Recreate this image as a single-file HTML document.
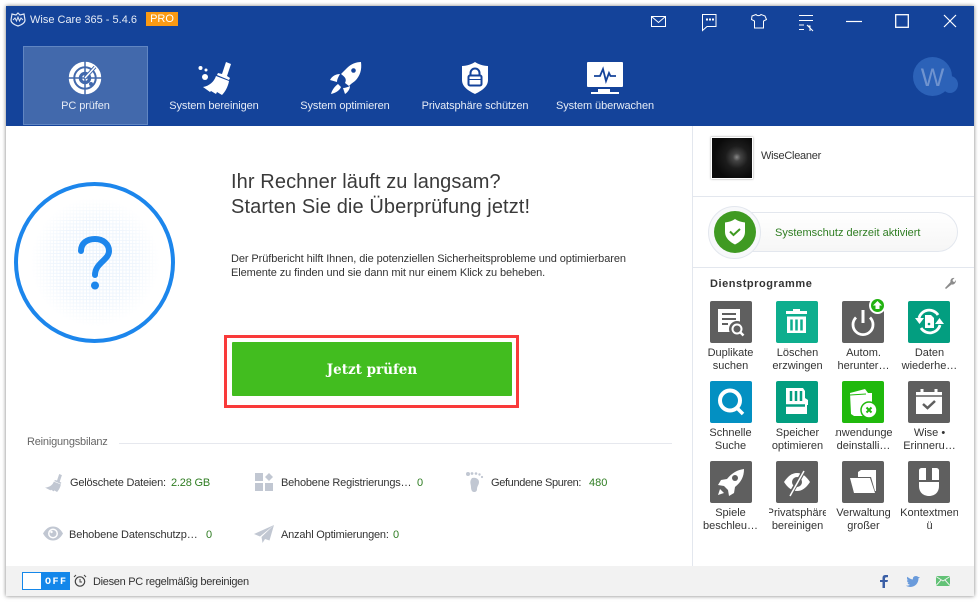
<!DOCTYPE html>
<html><head><meta charset="utf-8">
<style>
html,body{margin:0;padding:0;width:980px;height:602px;overflow:hidden;background:#fff;font-family:"Liberation Sans",sans-serif;}
div,svg,span{position:absolute;}
.t{white-space:nowrap;font-size:11px;line-height:13px;color:#333;letter-spacing:-.2px;}
.n{white-space:nowrap;font-size:11px;line-height:14px;color:#e6ecf6;text-align:center;top:99px;letter-spacing:-.1px;}
.i{width:42px;height:42px;border-radius:2px;background:#5f5f5f;}
.l{width:57px;overflow:hidden;text-align:center;white-space:nowrap;font-size:11px;line-height:13px;color:#333;}
.l span{position:static;display:block;margin:0 -30px;}
.g{color:#2f7d22;letter-spacing:0;}
</style></head><body>
<div style="left:6px;top:6px;width:968px;height:590px;box-shadow:0 0 4px rgba(0,0,0,.5);background:#fff;"></div>
<div style="left:6px;top:6px;width:968px;height:120px;background:#14439a;"></div>

<svg style="left:10px;top:12px" width="16" height="15" viewBox="0 0 16 15"><path d="M8 1l2 2 4-1 1 6c0 3-4 5-7 6-3-1-7-3-7-6l1-6 4 1z" fill="none" stroke="#dfe7f5" stroke-width="1.2"/><path d="M3 8l2-2 1.500 3L8 5l1.500 4L11 6l2 2" fill="none" stroke="#dfe7f5" stroke-width="1"/></svg>
<div class="t" style="left:30px;top:14px;color:#e6ecf6;font-size:11px;letter-spacing:0;">Wise Care 365 - 5.4.6</div>
<div style="left:146px;top:12px;width:32px;height:14px;background:#fb9a13;color:#fff;font-size:11px;line-height:14px;text-align:center;">PRO</div>

<svg style="left:650px;top:12px" width="320" height="20" viewBox="0 0 320 20" fill="none" stroke="#fff" stroke-width="1">
<path d="M1.500 4.500h14v10h-14zM1.500 4.500l7 6 7-6"/>
<path d="M52.500 2.500h13.500v12h-9l-4.500 4z"/><path d="M56 7.500h2M59 7.500h2M62 7.500h2" stroke-width="2"/>
<path d="M102 4l4-1.500c1 1.500 4 1.500 5 0l4 1.500 1.500 3.500-3 1.500v7h-9v-7l-3-1.500z"/>
<path d="M149 3.500h14M149 8.500h14M149 13h5M149 17.500h5M160 19v-5h-2.500M157 13l6 6"/>
<path d="M196 9.500h16" stroke-width="1.200"/>
</svg>
<svg style="left:895px;top:14px" width="14" height="14" viewBox="0 0 14 14"><rect x="0.700" y="0.700" width="12.600" height="12.600" fill="none" stroke="#fff" stroke-width="1.300"/></svg>
<svg style="left:943px;top:14px" width="14" height="14" viewBox="0 0 14 14"><path d="M1 1l12 12M13 1L1 13" stroke="#fff" stroke-width="1.200"/></svg>

<div style="left:23px;top:46px;width:123px;height:77px;background:#4269ac;border:1px solid #6186c2;"></div>
<svg style="left:68px;top:61px" width="34" height="34" viewBox="0 0 34 34" fill="none" stroke="#fff">
<circle cx="17" cy="17" r="14" stroke-width="4.500"/><circle cx="17" cy="17" r="8" stroke-width="3.500"/><circle cx="17" cy="17" r="3" fill="#fff" stroke="none"/>
<path d="M17 0v34M0 17h34" stroke="#4269ac" stroke-width="1.500"/><path d="M17 17L27 6" stroke="#4269ac" stroke-width="3.500"/><path d="M17 17L27 6" stroke="#fff" stroke-width="1.500"/>
<circle cx="23" cy="23" r="2" fill="#4269ac" stroke="none"/></svg>
<div class="n" style="left:23px;width:125px;">PC prüfen</div>

<svg style="left:198px;top:61px" width="35" height="35" viewBox="0 0 35 35" fill="#fff">
<path d="M28 1L33 3 29 15 32 17 31 19 19 14 20 12 24 13z"/>
<path d="M18 15L31 20C30 26 27 31 24 34L19 31 18 33 13 30 12 31 5 26C11 25 16 21 18 15z"/>
<circle cx="2.500" cy="7" r="2"/><circle cx="8" cy="9" r="1.500"/><circle cx="7" cy="16" r="3"/></svg>
<div class="n" style="left:154px;width:120px;">System bereinigen</div>

<svg style="left:329px;top:61px" width="33" height="34" viewBox="0 0 33 34" fill="#fff">
<path d="M32 1c1 8-1 14-6 19l-4 3-2 2-4-3C18 18 16 16 12 13l3-3 3-3c4-4 9-6 14-6z"/><circle cx="24.500" cy="9.500" r="2.300" fill="#14439a"/>
<path d="M11 13c-4 0-8 2-10 6l7 2c0-3 2-6 3-8zM21 25c0 3-2 6-5 8l-2-6c2 0 5-1 7-2zM9 23l3 3c-1 3-5 6-10 7 1-4 4-8 7-10z"/></svg>
<div class="n" style="left:285px;width:120px;">System optimieren</div>

<svg style="left:461px;top:61px" width="28" height="34" viewBox="0 0 28 34">
<path d="M14 1c3 2 8 4 13 4v14c0 7-7 11-13 14C8 30 1 26 1 19V5c5 0 10-2 13-4z" fill="#fff"/>
<rect x="7.500" y="14.500" width="13" height="10" rx="1.500" fill="none" stroke="#14439a" stroke-width="2"/><path d="M9.500 14.500v-2.500a4.500 4.500 0 0 1 9 0v2.500" fill="none" stroke="#14439a" stroke-width="2"/><path d="M8 18.500h12" stroke="#14439a" stroke-width="1"/></svg>
<div class="n" style="left:410px;width:130px;">Privatsphäre schützen</div>

<svg style="left:587px;top:62px" width="36" height="32" viewBox="0 0 36 32">
<rect x="0" y="0" width="36" height="25" rx="1" fill="#fff"/>
<path d="M11 27h12v3H11zM4 30h28v2H4z" fill="#fff"/>
<path d="M7 14h6l3-7 3 12 3-8 1.500 3H29" fill="none" stroke="#14439a" stroke-width="1.800"/></svg>
<div class="n" style="left:545px;width:120px;">System überwachen</div>

<div style="left:913px;top:57px;width:39px;height:39px;border-radius:50%;background:#2c62b8;"></div>
<div style="left:942px;top:76px;width:16px;height:17px;border-radius:50%;background:#2c62b8;"></div>
<div style="left:913px;top:63px;width:39px;text-align:center;color:#6f93cf;font-size:25px;line-height:30px;">W</div>

<!-- left -->
<div style="left:14px;top:182px;width:161px;height:161px;box-sizing:border-box;border:4px solid #1c86ec;border-radius:50%;background:#fff;"></div>
<div style="left:30px;top:197px;width:130px;height:130px;background-image:linear-gradient(#e2eefb 1px,transparent 1px),linear-gradient(90deg,#e2eefb 1px,transparent 1px);background-size:3.300px 3.300px;-webkit-mask-image:radial-gradient(circle,rgba(0,0,0,.8) 0,rgba(0,0,0,.55) 45%,transparent 70%);mask-image:radial-gradient(circle,rgba(0,0,0,.8) 0,rgba(0,0,0,.55) 45%,transparent 70%);"></div>
<svg style="left:70px;top:230px" width="50" height="66" viewBox="0 0 50 66" fill="none"><path d="M11 21C11 13 17 9 25 9C33 9 39 14 39 21C39 30 25 33 25 45" stroke="#1c86ec" stroke-width="6" stroke-linecap="round"/><circle cx="25" cy="55.500" r="4" fill="#1c86ec"/></svg>

<div style="left:231px;top:170px;font-size:20px;letter-spacing:.1px;line-height:25px;color:#3a3a3a;white-space:nowrap;">Ihr Rechner läuft zu langsam?<br>Starten Sie die Überprüfung jetzt!</div>
<div style="left:231px;top:253px;font-size:11px;letter-spacing:-.09px;line-height:13.500px;color:#333;white-space:nowrap;">Der Prüfbericht hilft Ihnen, die potenziellen Sicherheitsprobleme und optimierbaren<br>Elemente zu finden und sie dann mit nur einem Klick zu beheben.</div>

<div style="left:224px;top:335px;width:295px;height:73px;box-sizing:border-box;border:3px solid #f93a3a;"></div>
<div style="left:232px;top:342px;width:280px;height:54px;background:#42bd1f;border-radius:1px;color:#fff;font:bold 13.500px/56px 'DejaVu Serif',serif;text-align:center;">Jetzt prüfen</div>

<div class="t" style="left:27px;top:436px;color:#666;">Reinigungsbilanz</div>
<div style="left:119px;top:443px;width:553px;height:1px;background:#e6e8ee;"></div>

<svg style="left:44px;top:473px" width="19" height="20" viewBox="0 0 35 35" fill="#c1c7d2"><path d="M28 1L33 3 29 15 32 17 31 19 19 14 20 12 24 13z"/><path d="M18 15L31 20C30 26 27 31 24 34L19 31 18 33 13 30 12 31 2 26C11 25 16 21 18 15z"/></svg>
<div class="t" style="left:70px;top:477px;">Gelöschete Dateien:</div>
<div class="t g" style="left:171px;top:477px;letter-spacing:-.2px;">2.28 GB</div>

<svg style="left:255px;top:473px" width="18" height="18" viewBox="0 0 18 18" fill="#c1c7d2"><rect width="8" height="8"/><rect y="10" width="8" height="8"/><rect x="10" y="10" width="8" height="8"/><path d="M14 0l4 4-4 4-4-4z"/></svg>
<div class="t" style="left:281px;top:477px;">Behobene Registrierungs…</div>
<div class="t g" style="left:417px;top:477px;">0</div>

<svg style="left:466px;top:472px" width="18" height="20" viewBox="0 0 18 20" fill="#c1c7d2"><path d="M6 6c4-1 7 1 7 4 0 3-2 4-2 7 0 2-1 3-3 3s-3-2-3-5-2-5 1-9z"/><circle cx="2" cy="2" r="2"/><circle cx="6" cy="1.500" r="1.400"/><circle cx="10" cy="1.500" r="1.300"/><circle cx="13.500" cy="2.500" r="1.200"/><circle cx="16" cy="5" r="1.100"/></svg>
<div class="t" style="left:491px;top:477px;letter-spacing:-.35px;">Gefundene Spuren:</div>
<div class="t g" style="left:589px;top:477px;">480</div>

<svg style="left:43px;top:526px" width="20" height="15" viewBox="0 0 20 15"><path d="M0 7.500C3 2.500 6 0.500 10 0.500s7 2 10 7c-3 5-6 7-10 7s-7-2-10-7z" fill="#c1c7d2"/><circle cx="10" cy="7.500" r="5" fill="#fff"/><circle cx="10" cy="7.500" r="3.500" fill="#c1c7d2"/><circle cx="8.500" cy="6" r="1.200" fill="#fff"/></svg>
<div class="t" style="left:69px;top:529px;letter-spacing:-.13px;">Behobene Datenschutzp…</div>
<div class="t g" style="left:206px;top:529px;">0</div>

<svg style="left:254px;top:525px" width="20" height="18" viewBox="0 0 20 18" fill="#c1c7d2"><path d="M20 0L0 9l6 2.500zM20 0L7.500 12l1 6 2.500-4 4.500 1.500z"/></svg>
<div class="t" style="left:281px;top:529px;">Anzahl Optimierungen:</div>
<div class="t g" style="left:393px;top:529px;">0</div>

<!-- footer -->
<div style="left:6px;top:566px;width:968px;height:30px;background:#f2f2f2;"></div>
<div style="left:22px;top:572px;width:48px;height:18px;background:#1487ea;"></div>
<div style="left:23px;top:573px;width:18px;height:16px;background:#fff;"></div>
<div style="left:45px;top:577px;font:bold 10px/12px 'Liberation Mono',monospace;color:#fff;letter-spacing:1.500px;">OFF</div>
<svg style="left:73px;top:574px" width="14" height="14" viewBox="0 0 14 14" fill="none" stroke="#444"><circle cx="7" cy="7.500" r="4.700" stroke-width="1.200"/><path d="M7 5v3h2M1 3l2-2M13 3l-2-2"/></svg>
<div class="t" style="left:93px;top:576px;letter-spacing:-.3px;">Diesen PC regelmäßig bereinigen</div>

<svg style="left:880px;top:575px" width="8" height="13" viewBox="0 0 8 13"><path d="M2.500 13V7H0V5h2.500V3C2.500 1 3.500 0 5.500 0H8v2.200H6.500C5.500 2.200 5 2.700 5 3.500V5h3L7.500 7H5v6z" fill="#3b5fa6"/></svg>
<svg style="left:906px;top:576px" width="14" height="11" viewBox="0 0 14 12" preserveAspectRatio="none" fill="#6a9bdb"><path d="M14 1.500l-1.500 1C12.500 8 9 12 4.500 12 3 12 1 11.500 0 10.500c1.500 0 3 0 4-1C3 9.500 2 9 1.500 7.500h1.500C1.500 7 1 6 1 4.500l1.500.5C1 4 .5 2 1.500.8 3 2.500 5 3.700 7 3.700 6.500 1.500 8 0 10 0c1 0 1.500.4 2 1z"/></svg>
<svg style="left:936px;top:576px" width="14" height="10" viewBox="0 0 14 11" preserveAspectRatio="none"><rect width="14" height="11" fill="#62c276"/><path d="M0 .5l7 5 7-5M0 10.500l5-6M14 10.500l-5-6" fill="none" stroke="#f2f2f2"/></svg>

<!-- right -->
<div style="left:692px;top:126px;width:1px;height:440px;background:#e3e7ee;"></div>
<div style="left:693px;top:196px;width:281px;height:1px;background:#e3e7ee;"></div>
<div style="left:693px;top:267px;width:281px;height:1px;background:#e3e7ee;"></div>
<div style="left:711px;top:137px;width:42px;height:42px;background:radial-gradient(circle at 62% 48%,#888 0,#444 12%,#1c1c1c 35%,#0a0a0a 70%);box-shadow:0 0 2px #999;border:1px solid #fff;box-sizing:border-box;"></div>
<div class="t" style="left:761px;top:150px;letter-spacing:-.27px;">WiseCleaner</div>

<div style="left:713px;top:212px;width:245px;height:40px;box-sizing:border-box;border:1px solid #e3e7ee;border-radius:20px;background:linear-gradient(#fff,#f6f6f6);"></div>
<div style="left:708px;top:206px;width:53px;height:53px;box-sizing:border-box;border-radius:50%;background:#f7f8fa;border:1px solid #e3e7ee;"></div>
<div style="left:714px;top:211px;width:42px;height:42px;border-radius:50%;background:#3f9a22;"></div>
<svg style="left:725px;top:219px" width="20" height="26" viewBox="0 0 20 26"><path d="M10 0c3 2 6 3 10 3.500V13c0 6-5 10-10 12.500C5 23 0 19 0 13V3.500C4 3 7 2 10 0z" fill="#fff"/><path d="M5 12.500l3.500 3.500L15 10" fill="none" stroke="#3f9a22" stroke-width="2"/></svg>
<div class="t" style="left:775px;top:227px;color:#2f7d22;letter-spacing:0;">Systemschutz derzeit aktiviert</div>

<div class="t" style="left:710px;top:278px;font-weight:bold;letter-spacing:.55px;">Dienstprogramme</div>
<svg style="left:944px;top:277px" width="12" height="12" viewBox="0 0 12 12"><path d="M1 11l5.500-6C6 3 7.500 0.500 10.500 1L8.500 3l.5 1.500L10.500 5 12 3c0 3-2 5-4.500 4.500L2 12z" fill="#8c8c8c"/></svg>

<div class="i" style="left:710px;top:301px;"></div>
<svg style="left:710px;top:301px" width="42" height="42" viewBox="0 0 42 42"><path d="M8 8h22v23H8z" fill="#fff"/><path d="M12 13h14M12 18h14M12 23h6" stroke="#5f5f5f" stroke-width="2"/><circle cx="27" cy="28" r="8" fill="#5f5f5f"/><circle cx="27" cy="28" r="4.500" fill="none" stroke="#fff" stroke-width="2"/><path d="M30.500 31.500l3 3" stroke="#fff" stroke-width="2.500"/></svg>
<div class="l" style="left:702px;top:347px;"><span>Duplikate</span><span>suchen</span></div>

<div class="i" style="left:776px;top:301px;background:#0eae8e;"></div>
<svg style="left:776px;top:301px" width="42" height="42" viewBox="0 0 42 42" fill="#fff"><path d="M17 8h7v2h7v3H10v-3h7z"/><path d="M11 15.500h19V32H11z"/><path d="M15.500 18.500v11M20.500 18.500v11M25.500 18.500v11" stroke="#0eae8e" stroke-width="2.500"/></svg>
<div class="l" style="left:769px;top:347px;"><span>Löschen</span><span>erzwingen</span></div>

<div class="i" style="left:842px;top:301px;"></div>
<svg style="left:842px;top:301px" width="42" height="42" viewBox="0 0 42 42" fill="none" stroke="#fff"><path d="M14 16.500A10 10 0 1 0 28 16.500" stroke-width="2.800"/><path d="M21 9v13" stroke-width="3"/></svg>
<div style="left:869px;top:297px;width:17px;height:17px;box-sizing:border-box;border:2px solid #fff;border-radius:50%;background:#22b211;"></div>
<svg style="left:872px;top:300px" width="11" height="11" viewBox="0 0 11 11"><path d="M5.500 1L10 5.500H7.500V9h-4V5.500H1z" fill="#fff"/></svg>
<div class="l" style="left:835px;top:347px;"><span>Autom.</span><span>herunter…</span></div>

<div class="i" style="left:908px;top:301px;background:#039e80;"></div>
<svg style="left:908px;top:301px" width="42" height="42" viewBox="0 0 42 42" fill="none"><path d="M11 17A10.500 10.500 0 0 1 30 14M32 24A10.500 10.500 0 0 1 13 27" stroke="#fff" stroke-width="2.800"/><path d="M7 17h9l-4.500 6zM27 23h9l-4.500-6z" fill="#fff"/><path d="M17 14h6l3 3v10h-9z" fill="#fff"/><circle cx="21" cy="23" r="1.300" fill="#039e80"/></svg>
<div class="l" style="left:901px;top:347px;"><span>Daten</span><span>wiederhe…</span></div>

<div class="i" style="left:710px;top:381px;background:#0390c2;"></div>
<svg style="left:710px;top:381px" width="42" height="42" viewBox="0 0 42 42" fill="none" stroke="#fff"><circle cx="20" cy="19.500" r="10" stroke-width="4"/><path d="M27 27l6 6" stroke-width="3.500"/></svg>
<div class="l" style="left:702px;top:427px;"><span>Schnelle</span><span>Suche</span></div>

<div class="i" style="left:776px;top:381px;background:#039e80;"></div>
<svg style="left:776px;top:381px" width="42" height="42" viewBox="0 0 42 42"><path d="M10 7h17l2 3v7l3 2v5h-1v9H10z" fill="#fff"/><path d="M15 10v10M20 10v10M25 10v10" stroke="#039e80" stroke-width="2.500"/><path d="M10 24.500h19" stroke="#039e80" stroke-width="2.500"/></svg>
<div class="l" style="left:769px;top:427px;"><span>Speicher</span><span>optimieren</span></div>

<div class="i" style="left:842px;top:381px;background:#20b90c;"></div>
<svg style="left:842px;top:381px" width="42" height="42" viewBox="0 0 42 42"><path d="M8 12l15-4 3 4h4v14l-6 9H12l-3-2z" fill="#fff"/><path d="M8 14l16-1" fill="none" stroke="#20b90c" stroke-width="1"/><circle cx="27" cy="29" r="8" fill="#fff" stroke="#20b90c" stroke-width="1.500"/><path d="M24.500 26.500l5 5M29.500 26.500l-5 5" stroke="#20b90c" stroke-width="2"/></svg>
<div class="l" style="left:835px;top:427px;"><span>Anwendungen</span><span>deinstalli…</span></div>

<div class="i" style="left:908px;top:381px;"></div>
<svg style="left:908px;top:381px" width="42" height="42" viewBox="0 0 42 42"><path d="M8 11h26v22H8z" fill="#fff"/><path d="M8 15h26" stroke="#5f5f5f" stroke-width="1.500"/><path d="M14 8v5M28 8v5" stroke="#fff" stroke-width="3"/><path d="M15 23l4.500 4 7.500-7" fill="none" stroke="#5f5f5f" stroke-width="2.500"/></svg>
<div class="l" style="left:901px;top:427px;"><span>Wise •</span><span>Erinneru…</span></div>

<div class="i" style="left:710px;top:461px;"></div>
<svg style="left:710px;top:461px" width="42" height="42" viewBox="0 0 42 42" fill="#fff"><path d="M34 8c0 8-3 13-9 18l-1 6-5 3-1-6-4-4-6-1 3-5 6-1c5-6 10-9 17-10z"/><circle cx="25" cy="17" r="3" fill="#5f5f5f"/><path d="M10 28l4 4-6 2z"/></svg>
<div class="l" style="left:702px;top:507px;"><span>Spiele</span><span>beschleu…</span></div>

<div class="i" style="left:776px;top:461px;"></div>
<svg style="left:776px;top:461px" width="42" height="42" viewBox="0 0 42 42"><path d="M8 21c4-6 8-9 13-9s9 3 13 9c-4 6-8 9-13 9s-9-3-13-9z" fill="#fff"/><circle cx="21" cy="21" r="5" fill="#5f5f5f"/><path d="M14 34l14-24" stroke="#5f5f5f" stroke-width="4"/><path d="M14 35l14-25" stroke="#fff" stroke-width="1.500"/></svg>
<div class="l" style="left:769px;top:507px;"><span>Privatsphäre</span><span>bereinigen</span></div>

<div class="i" style="left:842px;top:461px;"></div>
<svg style="left:842px;top:461px" width="42" height="42" viewBox="0 0 42 42" fill="#fff"><path d="M16 11l3-2h15v21h-1l-4-14H16z"/><path d="M8 17h20l5 15H12z"/></svg>
<div class="l" style="left:835px;top:507px;"><span>Verwaltung</span><span>großer</span></div>

<div class="i" style="left:908px;top:461px;"></div>
<svg style="left:908px;top:461px" width="42" height="42" viewBox="0 0 42 42" fill="#fff"><path d="M11 9a3 3 0 0 1 3-2h4v12h-7zM24 7h4a3 3 0 0 1 3 2v10h-7z"/><path d="M11 21h20v4c0 7-5 10-10 10s-10-3-10-10z"/></svg>
<div class="l" style="left:901px;top:507px;"><span>Kontextmen</span><span>ü</span></div>
</body></html>
